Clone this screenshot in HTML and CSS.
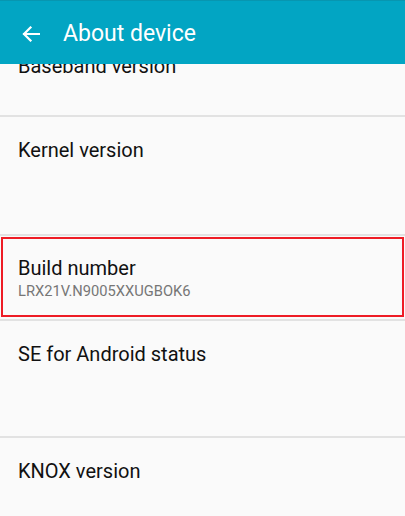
FILE: index.html
```html
<!DOCTYPE html>
<html>
<head>
<meta charset="utf-8">
<link rel="stylesheet" href="styles.css">
</head>
<body>
<div class="screen">
  <header class="appbar">
    <svg class="back" width="18" height="16" viewBox="0 0 18 16" aria-hidden="true">
      <path d="M17 8H2M8.5 1.5L2 8l6.5 6.5" fill="none" stroke="#fff" stroke-width="2.2" stroke-linecap="square"/>
    </svg>
    <h1 class="title">About device</h1>
  </header>
  <main class="viewport">
    <ul class="list">
      <li class="row row-first"><div class="label">Baseband version</div></li>
      <li class="row row-kernel"><div class="label">Kernel version</div></li>
      <li class="row row-build highlight">
        <div class="label">Build number</div>
        <div class="summary">LRX21V.N9005XXUGBOK6</div>
      </li>
      <li class="row row-se"><div class="label">SE for Android status</div></li>
      <li class="row row-se"><div class="label">KNOX version</div></li>
    </ul>
  </main>
</div>
</body>
</html>
```

FILE: styles.css
```css
* { box-sizing: border-box; }
html, body { margin: 0; padding: 0; }
body {
  background: #fafafa;
  font-family: Roboto, "Noto Sans", sans-serif;
  width: 405px;
  height: 516px;
  overflow: hidden;
}
.screen {
  display: flex;
  flex-direction: column;
  height: 516px;
}
.appbar {
  flex: 0 0 64px;
  background: #02a5c3;
  border-top: 1px solid #0796b0;
  display: flex;
  align-items: center;
  padding-left: 22px;
  position: relative;
  z-index: 1;
}
.back { display: block; margin-top: 3px; }
.title {
  margin: 2px 0 0 23px;
  color: #fff;
  font-weight: 400;
  font-size: 23px;
  line-height: 28px;
}
.viewport {
  flex: 1;
  overflow: hidden;
}
.list {
  list-style: none;
  margin: -31px 0 0 0;
  padding: 0;
}
.row {
  position: relative;
  padding: 21px 18px 0;
  border-bottom: 2px solid #e2e2e2;
}
.row-first { height: 84px; }
.row-kernel { height: 119px; }
.row-build { height: 85px; padding-top: 20px; }
.row-se { height: 117px; }
.label {
  font-size: 20px;
  line-height: 24px;
  color: #111;
}
.summary {
  font-size: 14.7px;
  line-height: 20px;
  color: #767676;
  margin-top: 1px;
}
.highlight::after {
  content: "";
  position: absolute;
  left: 1px;
  right: 1px;
  top: 1px;
  bottom: 2px;
  border: 2px solid #ee1c25;
}
```
